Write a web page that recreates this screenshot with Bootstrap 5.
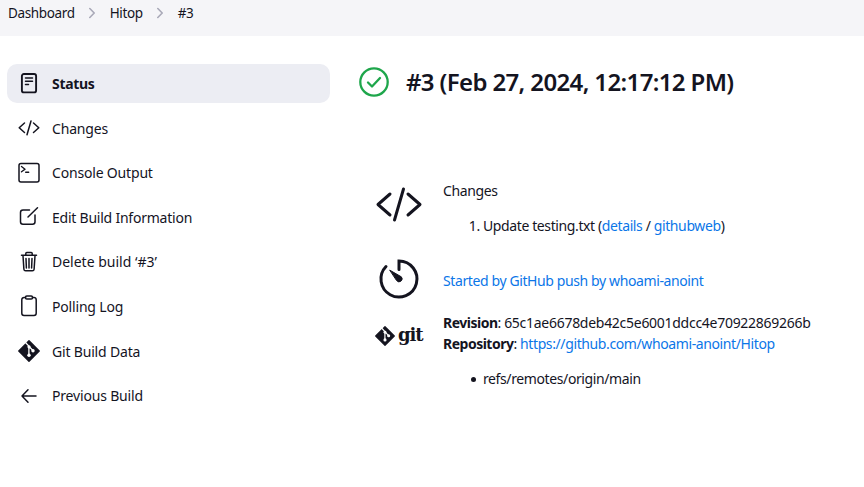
<!DOCTYPE html>
<html lang="en">
<head>
<meta charset="utf-8">
<meta name="viewport" content="width=device-width, initial-scale=1">
<title>Hitop #3</title>
<link href="https://cdn.jsdelivr.net/npm/bootstrap@5.3.0/dist/css/bootstrap.min.css" rel="stylesheet">
<style>
body{font-family:"Noto Sans","Open Sans",sans-serif;font-size:14px;line-height:21px;color:#14141f;background:#fff;overflow:hidden}
svg{display:block;flex:none;fill:none;stroke:#14141f;stroke-linecap:round;stroke-linejoin:round}
a{color:#0b76e8;text-decoration:none}
.crumbs{height:36px;background:#f5f5f8;padding:3px 0 0 8px;font-size:13.5px;line-height:20px;letter-spacing:-.37px}
.crumbs svg{stroke:#a9a9b8;stroke-width:1.6;margin:0 14.4px 0 14.7px}
.side{width:330px;padding:28px 0 0 7px}
.side .nav{gap:5.6px}
.side .nav-link{height:39px;padding:0 0 0 11px;gap:12px;color:#14141f;border-radius:10px;font-size:14px;letter-spacing:-.18px}
.side .nav-link.active{background:#ecedf3;font-weight:700;letter-spacing:-.3px}
.side .nav-link span{padding-top:.3px}
.side .nav-link .tight{letter-spacing:-.23px}
.side .nav-link .loose{letter-spacing:0;padding-top:0}
.side svg{width:22px;height:22px;stroke-width:1.5}
.side .active svg{stroke-width:1.9}
.main-panel{padding:28px 0 0 29px}
.main-panel h1{font-size:24px;line-height:36px;font-weight:600;white-space:nowrap;letter-spacing:-.63px;margin-left:17px}
.status-ok{stroke:#1ea64b;stroke-width:2.3}
.entry-icon{width:48px;margin:0 20px 0 16px}
.entry{white-space:nowrap;letter-spacing:-.39px}
.entry-changes{padding-top:80px}
.entry-cause{padding-top:19px}
.entry-cause-text{padding-top:15px}
.entry-git{padding-top:9px}
.entry-git .entry-icon{padding-top:13px}
.entry b{letter-spacing:-.5px}
.hash{letter-spacing:-.28px}
.main-panel ol,.main-panel ul{padding-left:40px;margin:14px 0 0}
.main-panel ul{list-style:none}
.main-panel ul li::before{content:"";display:inline-block;width:5px;height:5px;border-radius:50%;background:#14141f;margin:0 7px 0 -12px;vertical-align:2px}
.git-word{font:700 18px/20px "DejaVu Serif",serif;letter-spacing:-1.1px;margin-left:3px}
</style>
<script src="https://cdn.jsdelivr.net/npm/bootstrap@5.3.0/dist/js/bootstrap.bundle.min.js"></script>
</head>
<body>
<svg width="0" height="0" class="d-none">
<symbol id="code" viewBox="0 0 48 48"><path d="M15 14 3 24.500l12 10.500M33 14l12 10.500-12 10.500M28.500 9l-9 31"/></symbol>
<symbol id="gitmark" viewBox="0 0 22 22"><path d="M11 .8 21.2 11 11 21.2.8 11z" fill="#14141f" stroke="#14141f" stroke-width="1.4"/><path d="M7.5 2.5l3.4 3.6v9.4M11 6.5l4 4" stroke="#fff" stroke-width="1.3"/><circle cx="11" cy="6.8" r="1.6" fill="#fff" stroke="none"/><circle cx="11" cy="15.3" r="1.7" fill="#fff" stroke="none"/><circle cx="15" cy="10.8" r="1.7" fill="#fff" stroke="none"/></symbol>
</svg>
<nav class="crumbs" aria-label="breadcrumb">
<div class="d-flex align-items-center">
<span>Dashboard</span>
<svg width="6" height="12" viewBox="0 0 6 12"><path d="M.8 1.5 5.2 6 .8 10.5"/></svg>
<span>Hitop</span>
<svg width="6" height="12" viewBox="0 0 6 12"><path d="M.8 1.5 5.2 6 .8 10.5"/></svg>
<span>#3</span>
</div>
</nav>
<div class="d-flex">
<aside class="side flex-shrink-0">
<nav class="nav flex-column">
<a class="nav-link active d-flex align-items-center" href="#"><svg viewBox="0 0 22 22"><rect x="3.9" y="1" width="14.2" height="18.4" rx="2"/><path d="M7.5 5h7M7.500 8.200h7M7.500 11.500h3" stroke-width="1.5"/></svg><span>Status</span></a>
<a class="nav-link d-flex align-items-center" href="#"><svg viewBox="0 0 22 22"><path d="M6.500 6 1.200 10.700l5.300 4.800M15.500 6l5.300 4.700-5.300 4.800M13 4 9 17.800" stroke-width="1.500"/></svg><span>Changes</span></a>
<a class="nav-link d-flex align-items-center" href="#"><svg viewBox="0 0 22 22"><rect x="1" y="1.6" width="20" height="18.4" rx="2"/><path d="M3.5 4.5 7 7.2 3.5 9.8M7.7 10.2h3" stroke-width="1.4"/></svg><span>Console Output</span></a>
<a class="nav-link d-flex align-items-center" href="#"><svg viewBox="0 0 22 22"><path d="M11.500 4H5a2.500 2.500 0 0 0-2.500 2.500v9.300A2.500 2.500 0 0 0 5 18.300h9.500a2.500 2.500 0 0 0 2.500-2.500V9M10 11 19.500 1.800"/></svg><span class="tight">Edit Build Information</span></a>
<a class="nav-link d-flex align-items-center" href="#"><svg viewBox="0 0 22 22"><path d="M3.5 4.3h15M7.8 4V2.5c0-.7.4-1 1-1h4.400c.6 0 1 .3 1 1V4M5 4.800l.9 13.400c.1 1 .7 1.600 1.700 1.600h6.800c1 0 1.600-.6 1.700-1.600L17 4.800M8 7.500l.4 9.500M11 7.500V17M14 7.500l-.4 9.500"/></svg><span class="loose">Delete build ‘#3’</span></a>
<a class="nav-link d-flex align-items-center" href="#"><svg viewBox="0 0 22 22"><path d="M7.5 2.500H6a2.200 2.200 0 0 0-2.200 2.200v13.600A2.200 2.200 0 0 0 6 20.500h10a2.200 2.200 0 0 0 2.200-2.200V4.700A2.200 2.200 0 0 0 16 2.500h-1.500"/><rect x="7.500" y="1" width="7" height="3" rx="1.300"/></svg><span>Polling Log</span></a>
<a class="nav-link d-flex align-items-center" href="#"><svg viewBox="0 0 22 22"><use href="#gitmark"/></svg><span>Git Build Data</span></a>
<a class="nav-link d-flex align-items-center" href="#"><svg viewBox="0 0 22 22"><path d="M10 4.800 4 11l6 6.200M4 11h14"/></svg><span>Previous Build</span></a>
</nav>
</aside>
<main class="main-panel flex-grow-1">
<div class="d-flex align-items-center">
<svg class="status-ok" width="30" height="30" viewBox="0 0 30 30"><circle cx="15" cy="15" r="13.700"/><path d="M9 15.500l4 4 8-8.500"/></svg>
<h1 class="mb-0">#3 (Feb 27, 2024, 12:17:12 PM)</h1>
</div>
<section class="entry entry-changes d-flex">
<div class="entry-icon"><svg width="48" height="48" viewBox="0 0 48 48" stroke-width="3"><use href="#code"/></svg></div>
<div><div>Changes</div><ol><li>Update testing.txt (<a href="#">details</a> / <a href="#">githubweb</a>)</li></ol></div>
</section>
<section class="entry entry-cause d-flex">
<div class="entry-icon"><svg width="48" height="48" viewBox="0 0 48 48" stroke-width="3"><path d="M24 14.500V6a18 18 0 1 1-13 5.500" stroke-linejoin="miter"/><path d="M15 15.300 26.300 21.800a3 3 0 1 1-4.500 4z" fill="#14141f" stroke-width="1"/></svg></div>
<div class="entry-cause-text"><a href="#">Started by GitHub push by whoami-anoint</a></div>
</section>
<section class="entry entry-git d-flex">
<div class="entry-icon d-flex align-items-start"><svg width="20" height="22" viewBox="0 0 22 22"><use href="#gitmark"/></svg><span class="git-word">git</span></div>
<div><div><b>Revision</b>: <span class="hash">65c1ae6678deb42c5e6001ddcc4e70922869266b</span></div><div><b>Repository</b>: <a href="#">https://github.com/whoami-anoint/Hitop</a></div><ul><li>refs/remotes/origin/main</li></ul></div>
</section>
</main>
</div>
</body>
</html>
